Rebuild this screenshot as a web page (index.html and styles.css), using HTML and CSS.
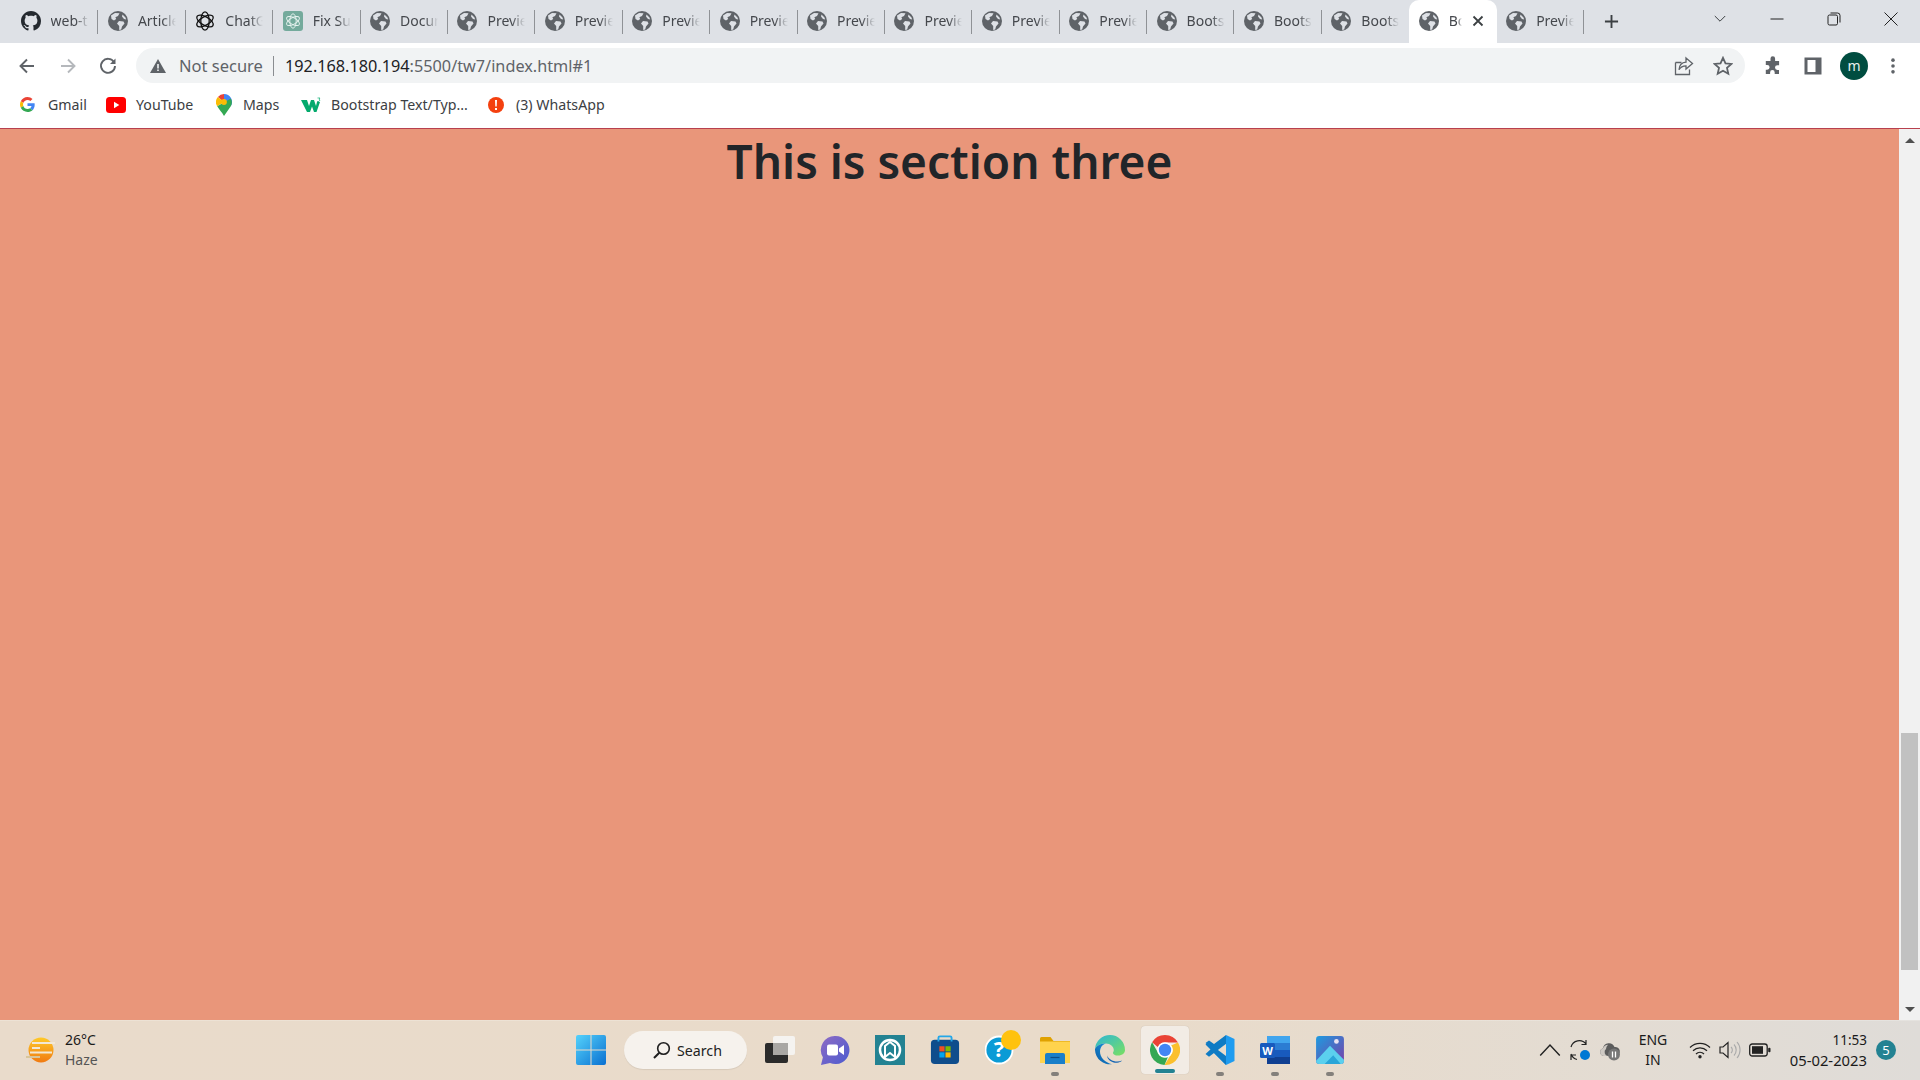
FILE: index.html
```html
<!DOCTYPE html>
<html lang="en">
<head>
<meta charset="utf-8">
<title>Bootstrap</title>
<link rel="stylesheet" href="styles.css">
</head>
<body>
<svg class="defs" width="0" height="0">
  <symbol id="globe" viewBox="0 0 20 20">
    <circle cx="10" cy="10" r="10" fill="#5f6368"/>
    <path d="M3 4.500l4-2.600 4.500.3L10 5 7.400 6.200 8.200 8 6 9.400 3.500 8zM11 10l4.500.4 1 2.200L14 15.500l-.8 3-2 .6V15L9 12.500zM14.500 3.500l3 3 .6 2-2.100-.6-2-2.400z" fill="#dee1e6"/>
  </symbol>
</svg>

<header class="tabstrip">
  <div class="tab sep"><svg class="fav" viewBox="0 0 16 16"><path fill="#24292f" d="M8 0C3.580 0 0 3.580 0 8c0 3.540 2.290 6.530 5.470 7.590.4.070.55-.17.55-.38 0-.19-.01-.82-.01-1.490-2.010.37-2.530-.49-2.690-.94-.09-.23-.48-.94-.82-1.130-.28-.15-.68-.52-.01-.53.63-.01 1.080.58 1.230.82.720 1.210 1.870.87 2.330.66.070-.52.280-.87.510-1.070-1.780-.2-3.640-.89-3.640-3.950 0-.87.310-1.590.82-2.150-.08-.2-.36-1.020.08-2.120 0 0 .67-.21 2.200.82.640-.18 1.320-.27 2-.27s1.360.09 2 .27c1.530-1.040 2.200-.82 2.200-.82.440 1.100.160 1.920.080 2.120.51.56.82 1.270.82 2.150 0 3.070-1.870 3.750-3.650 3.950.29.250.54.730.54 1.480 0 1.070-.01 1.930-.01 2.200 0 .21.150.46.550.38A8.010 8.010 0 0 0 16 8c0-4.420-3.580-8-8-8z"/></svg><span class="tab-title">web-t</span></div>
  <div class="tab sep"><svg class="fav"><use href="#globe"/></svg><span class="tab-title">Article</span></div>
  <div class="tab sep"><svg class="fav" viewBox="0 0 20 20"><g fill="none" stroke="#111" stroke-width="1.300"><ellipse cx="10" cy="10" rx="4.200" ry="9.200"/><ellipse cx="10" cy="10" rx="4.200" ry="9.200" transform="rotate(60 10 10)"/><ellipse cx="10" cy="10" rx="4.200" ry="9.200" transform="rotate(120 10 10)"/></g></svg><span class="tab-title">ChatGPT</span></div>
  <div class="tab sep"><svg class="fav" viewBox="0 0 20 20"><rect width="20" height="20" rx="3" fill="#74aa9c"/><g fill="none" stroke="#e8f3f0" stroke-width=".9"><ellipse cx="10" cy="10" rx="3.200" ry="7.200"/><ellipse cx="10" cy="10" rx="3.200" ry="7.200" transform="rotate(60 10 10)"/><ellipse cx="10" cy="10" rx="3.200" ry="7.200" transform="rotate(120 10 10)"/></g></svg><span class="tab-title">Fix Subm</span></div>
  <div class="tab sep"><svg class="fav"><use href="#globe"/></svg><span class="tab-title">Document</span></div>
  <div class="tab sep"><svg class="fav"><use href="#globe"/></svg><span class="tab-title">Preview</span></div>
  <div class="tab sep"><svg class="fav"><use href="#globe"/></svg><span class="tab-title">Preview</span></div>
  <div class="tab sep"><svg class="fav"><use href="#globe"/></svg><span class="tab-title">Preview</span></div>
  <div class="tab sep"><svg class="fav"><use href="#globe"/></svg><span class="tab-title">Preview</span></div>
  <div class="tab sep"><svg class="fav"><use href="#globe"/></svg><span class="tab-title">Preview</span></div>
  <div class="tab sep"><svg class="fav"><use href="#globe"/></svg><span class="tab-title">Preview</span></div>
  <div class="tab sep"><svg class="fav"><use href="#globe"/></svg><span class="tab-title">Preview</span></div>
  <div class="tab sep"><svg class="fav"><use href="#globe"/></svg><span class="tab-title">Preview</span></div>
  <div class="tab sep"><svg class="fav"><use href="#globe"/></svg><span class="tab-title">Bootstrap</span></div>
  <div class="tab sep"><svg class="fav"><use href="#globe"/></svg><span class="tab-title">Bootstrap</span></div>
  <div class="tab"><svg class="fav"><use href="#globe"/></svg><span class="tab-title">Bootstrap</span></div>
  <div class="tab active"><svg class="fav"><use href="#globe"/></svg><span class="tab-title short">Bootstrap</span>
    <svg class="tab-close" viewBox="0 0 12 12"><path d="M1.500 1.500l9 9m0-9l-9 9" stroke="#3c4043" stroke-width="1.800" fill="none"/></svg></div>
  <div class="tab sep"><svg class="fav"><use href="#globe"/></svg><span class="tab-title">Preview</span></div>
  <svg class="newtab" viewBox="0 0 16 16"><path d="M8 1v14M1 8h14" stroke="#3c4043" stroke-width="2" fill="none"/></svg>
  <div class="winctl">
    <svg class="wc-chev" viewBox="0 0 12 8"><path d="M.8 1l5.200 5.200L11.200 1" stroke="#3c4043" fill="none"/></svg>
    <svg class="wc-btn" viewBox="0 0 14 14"><path d="M.5 7h13" stroke="#222" fill="none"/></svg>
    <svg class="wc-btn" viewBox="0 0 14 14"><rect x="1" y="3" width="9.500" height="10" rx="1.500" stroke="#222" fill="none"/><path d="M3.500 1h7a2.500 2.500 0 0 1 2.500 2.500v7" stroke="#222" fill="none"/></svg>
    <svg class="wc-btn" viewBox="0 0 14 14"><path d="M.5.500l13 13m0-13l-13 13" stroke="#222" fill="none"/></svg>
  </div>
</header>

<nav class="toolbar">
  <svg class="tool" viewBox="0 0 20 20"><path d="M17 10H4m6-6.500L3.500 10l6.500 6.500" stroke="#5f6368" stroke-width="1.900" fill="none"/></svg>
  <svg class="tool tool-gap" viewBox="0 0 20 20"><path d="M3 10h13m-6-6.500l6.500 6.500-6.500 6.500" stroke="#b5b8bc" stroke-width="1.900" fill="none"/></svg>
  <svg class="tool tool-gap-r" viewBox="0 0 20 20"><path d="M16 6.200A7 7 0 1 0 17 10" stroke="#5f6368" stroke-width="1.900" fill="none"/><path d="M17.500 2.500v5.500H12z" fill="#5f6368"/></svg>
  <div class="omnibox">
    <svg class="warn" viewBox="0 0 16 14"><path d="M8 0l8 14H0z" fill="#5f6368"/><path d="M7.200 5h1.600v4.500H7.200zM7.200 10.500h1.600V12H7.200z" fill="#f1f3f4"/></svg>
    <span class="not-secure">Not secure</span>
    <span class="omni-sep"></span>
    <span class="url"><span class="host">192.168.180.194</span><span class="path">:5500/tw7/index.html#1</span></span>
    <svg class="omni-share" viewBox="0 0 20 20"><path d="M1.500 6.500h6M1.500 6.500v12h14v-5" stroke="#5f6368" stroke-width="1.300" fill="none"/><path d="M12 2l6.500 5.500L12 13v-3.200c-3.500 0-5.500 1.200-7 4 .3-4.500 2.800-7.300 7-7.600z" stroke="#5f6368" stroke-width="1.300" fill="none"/></svg>
    <svg class="omni-star" viewBox="0 0 20 20"><path d="M10 1.800l2.500 5.500 6 .6-4.500 4 1.300 5.900L10 14.800l-5.300 3 1.300-5.900-4.500-4 6-.6z" stroke="#5f6368" stroke-width="1.800" fill="none"/></svg>
  </div>
  <svg class="tool ext" viewBox="0 0 20 20"><path d="M7.500 2.500a2.300 2.300 0 0 1 4.600 0V5h4v4.200h-1.700a2.400 2.400 0 0 0 0 4.800H16V18h-4.300v-1.600a2.300 2.300 0 0 0-4.600 0V18H2.800v-4.300h1.400a2.400 2.400 0 0 0 0-4.800H2.800V5h4.700z" fill="#5f6368"/></svg>
  <svg class="tool panel" viewBox="0 0 20 20"><path fill-rule="evenodd" d="M1.500 1.500h17v17h-17zM4.500 4v12h8V4z" fill="#5f6368"/></svg>
  <span class="avatar">m</span>
  <svg class="tool dots" viewBox="0 0 20 20"><circle cx="10" cy="3.500" r="2" fill="#5f6368"/><circle cx="10" cy="10" r="2" fill="#5f6368"/><circle cx="10" cy="16.500" r="2" fill="#5f6368"/></svg>
</nav>

<nav class="bookmarks">
  <a class="bm bm-gmail"><svg class="bm-ico" viewBox="0 0 48 48"><path fill="#EA4335" d="M24 9.500c3.540 0 6.710 1.220 9.210 3.600l6.850-6.850C35.900 2.380 30.470 0 24 0 14.620 0 6.510 5.380 2.560 13.220l7.980 6.190C12.430 13.720 17.740 9.500 24 9.500z"/><path fill="#4285F4" d="M46.980 24.550c0-1.570-.15-3.090-.38-4.550H24v9.020h12.940c-.58 2.960-2.260 5.480-4.780 7.180l7.730 6c4.510-4.180 7.090-10.360 7.090-17.650z"/><path fill="#FBBC05" d="M10.530 28.590c-.48-1.450-.76-2.990-.76-4.590s.27-3.140.76-4.590l-7.980-6.190C.92 16.460 0 20.120 0 24c0 3.880.92 7.540 2.560 10.780l7.970-6.190z"/><path fill="#34A853" d="M24 48c6.480 0 11.930-2.130 15.890-5.810l-7.730-6c-2.150 1.450-4.920 2.300-8.160 2.300-6.260 0-11.570-4.220-13.470-9.910l-7.980 6.190C6.510 42.620 14.620 48 24 48z"/></svg>Gmail</a>
  <a class="bm bm-yt"><svg class="bm-ico yt" viewBox="0 0 20 16"><rect width="20" height="16" rx="3.500" fill="#f00"/><path d="M8 4.800l5.300 3.200L8 11.200z" fill="#fff"/></svg>YouTube</a>
  <a class="bm bm-maps"><svg class="bm-ico maps" viewBox="0 0 16 22"><path d="M8 0a8 8 0 0 1 6.800 12.200L8 5.500z" fill="#4285f4"/><path d="M8 0a8 8 0 0 0-6.100 2.900L8 8z" fill="#ea4335"/><path d="M1.900 2.900A8 8 0 0 0 1.200 12.200L8 8z" fill="#fbbc04"/><path d="M1.200 12.200L14.800 4.500a8 8 0 0 1 0 7.700L8 22C6 18 3 15.500 1.200 12.200z" fill="#34a853"/><circle cx="8" cy="8" r="2.900" fill="#fbbc04"/></svg>Maps</a>
  <a class="bm bm-w"><svg class="bm-ico w3" viewBox="0 0 20 16"><path d="M0 3h6l2 6 2-6h3l2 6 1-4h3l-3.500 10h-2.500L11 9.500 9 15H6z" fill="#04aa6d"/><path d="M16.500 1h2.500l-1 1.200 1 .8-1 1.500h-2" stroke="#04aa6d" stroke-width=".7" fill="none"/></svg>Bootstrap Text/Typ...</a>
  <a class="bm bm-wa"><svg class="bm-ico wa" viewBox="0 0 16 16"><circle cx="8" cy="8" r="8" fill="#f4400f"/><path d="M7 3h2l-.3 6.500H7.300zM7 11h2v2H7z" fill="#fff"/></svg>(3) WhatsApp</a>
</nav>

<main class="viewport">
  <section class="section-three"><h1 class="section-title">This is section three</h1></section>
  <aside class="scrollbar">
    <span class="arrow-up"></span>
    <span class="thumb"></span>
    <span class="arrow-down"></span>
  </aside>
</main>

<footer class="taskbar">
  <div class="weather">
    <svg class="weather-ico" viewBox="0 0 30 26"><defs><linearGradient id="sun" x1="0" y1="0" x2="0" y2="1"><stop offset="0" stop-color="#ffc928"/><stop offset="1" stop-color="#f07a12"/></linearGradient></defs><circle cx="15" cy="13" r="12.500" fill="url(#sun)"/><g stroke="#f2e8d5" stroke-width="2" fill="none"><path d="M6 6h23"/><path d="M6 11h8"/><path d="M4 15.500h22"/></g><path d="M0 20h14" stroke="#d8c59a" stroke-width="2"/></svg>
    <div class="weather-text"><span class="temp">26°C</span><span class="cond">Haze</span></div>
  </div>
  <div class="task-center">
    <span class="cell"><svg class="ti" viewBox="0 0 30 30"><defs><linearGradient id="w1" x1="0" y1="0" x2="1" y2="1"><stop offset="0" stop-color="#55d2fb"/><stop offset="1" stop-color="#0a70d1"/></linearGradient></defs><path d="M2 0h12.500v14.500H0V2a2 2 0 0 1 2-2zM15.500 0H28a2 2 0 0 1 2 2v12.500H15.500zM0 15.500h14.500V30H2a2 2 0 0 1-2-2zM15.500 15.500H30V28a2 2 0 0 1-2 2H15.500z" fill="url(#w1)"/></svg></span>
    <span class="search"><svg class="search-ico" viewBox="0 0 18 18"><circle cx="10.500" cy="7.500" r="5.800" stroke="#1f1f1f" stroke-width="1.600" fill="none"/><path d="M6.300 11.700L1 17" stroke="#1f1f1f" stroke-width="2" fill="none"/></svg>Search</span>
    <span class="cell"><svg class="ti" viewBox="0 0 30 30"><rect x="0" y="8" width="23" height="20" rx="2" fill="#2b2b2b"/><rect x="8" y="1" width="22" height="19" rx="2" fill="#f5f3f0"/><rect x="8" y="8" width="15" height="12" fill="#a9a7a4"/></svg></span>
    <span class="cell"><svg class="ti" viewBox="0 0 30 30"><defs><linearGradient id="tm" x1="0" y1="0" x2="1" y2="1"><stop offset="0" stop-color="#8e6bc4"/><stop offset="1" stop-color="#4b5bd0"/></linearGradient></defs><path d="M15.500 1a14 14 0 1 1-5.500 26.900L1 30l1.900-7.800A14 14 0 0 1 15.500 1z" fill="url(#tm)"/><rect x="7" y="9.500" width="11" height="11" rx="2" fill="#fff"/><path d="M19 13.500l5-3.500v10l-5-3.500z" fill="#fff"/></svg></span>
    <span class="cell"><svg class="ti" viewBox="0 0 30 30"><rect width="30" height="30" fill="#238292"/><circle cx="15" cy="15" r="10" fill="none" stroke="#fff" stroke-width="2.500"/><path d="M10 22V11l5-4 5 4v11l-5-4z" fill="none" stroke="#fff" stroke-width="2"/></svg></span>
    <span class="cell"><svg class="ti" viewBox="0 0 30 32"><rect y="5" width="30" height="26" rx="4" fill="#0f4d8c"/><path d="M8 7V3a1.500 1.500 0 0 1 1.500-1.500h11A1.500 1.500 0 0 1 22 3v4" stroke="#25a7e8" stroke-width="2" fill="none"/><rect x="9" y="12" width="5.500" height="5.500" fill="#f25022"/><rect x="15.500" y="12" width="5.500" height="5.500" fill="#7fba00"/><rect x="9" y="18.500" width="5.500" height="5.500" fill="#00a4ef"/><rect x="15.500" y="18.500" width="5.500" height="5.500" fill="#ffb900"/></svg></span>
    <span class="cell"><svg class="ti ti-help" viewBox="0 0 36 36"><circle cx="14" cy="20" r="13.500" fill="#0a9bd6" stroke="#fff" stroke-width="1.800"/><text class="help-q" x="14" y="27">?</text><circle cx="26" cy="10" r="10" fill="#ffc20e"/></svg></span>
    <span class="cell open"><svg class="ti" viewBox="0 0 30 28"><path d="M0 2.500A1.500 1.500 0 0 1 1.500 1h9l3 4H30v3H0z" fill="#e0a100"/><path d="M0 5.500h30V27H0z" fill="#ffd34d"/><path d="M5 19a2 2 0 0 1 2-2h16a2 2 0 0 1 2 2v9H5z" fill="#1a7fc9"/><path d="M10.500 21.500h9" stroke="#0d4f88" stroke-width="1.200"/></svg></span>
    <span class="cell"><svg class="ti" viewBox="0 0 30 30"><defs><linearGradient id="ed1" x1="0" y1="1" x2="1" y2="0"><stop offset="0" stop-color="#0c59a4"/><stop offset="1" stop-color="#1b9de2"/></linearGradient><linearGradient id="ed2" x1="0" y1="0" x2="1" y2="1"><stop offset="0" stop-color="#2cb6d6"/><stop offset="1" stop-color="#7be060"/></linearGradient></defs><path d="M15 0a15 15 0 0 1 15 15c0 3-2.500 5.500-7 5.500-3 0-5-1.200-5-2.600 0-.8.800-1.200.800-2.900 0-3.500-3.500-6.500-7.800-6.500C5.500 8.500 1.500 10.500 0 14A15 15 0 0 1 15 0z" fill="url(#ed2)"/><path d="M0 14c1.500-3.500 5.500-5.500 11-5.500-4 1-6 4.500-6 8 0 6 5 11 12 12.700A15 15 0 0 1 0 15z" fill="url(#ed1)"/><path d="M12 20c0 5 5 8 10 7.800 2-.1 4-1 5-2.300-3 1.500-8 1.500-11.500-1-2-1.500-3.500-3-3.500-4.500z" fill="#1666b4"/></svg></span>
    <span class="cell chrome-cell open-active"><svg class="ti" viewBox="0 0 30 30"><path d="M15 0a15 15 0 0 1 13 7.500H15a7.500 7.500 0 0 0-7 4.800L2.100 7.300A15 15 0 0 1 15 0z" fill="#ea4335"/><path d="M28 7.500A15 15 0 0 1 14.500 30l6.300-10.300A7.500 7.500 0 0 0 21 10.500z" fill="#fbc02d"/><path d="M14.500 30A15 15 0 0 1 2.100 7.300L8.700 19A7.500 7.500 0 0 0 18 21.700z" fill="#34a853"/><circle cx="15" cy="15" r="7.800" fill="#fff"/><circle cx="15" cy="15" r="6.200" fill="#4285f4"/></svg></span>
    <span class="cell open"><svg class="ti" viewBox="0 0 30 30"><path d="M21 0l8.500 4v22L21 30 9 18l12-9z" fill="#1f9cf0"/><path d="M21 0v9L9 18l-5 3.800L.5 19l6-5.500-6-5.500L4 5.500l5 3.500z" fill="#0f7bc4"/><path d="M21 30V20.500L4 7 .5 9.500l20.500 20.500z" fill="#0f7bc4"/><path d="M21 9v12l-8-6z" fill="#e8dccd"/></svg></span>
    <span class="cell open"><svg class="ti" viewBox="0 0 30 28"><rect x="7" y="0" width="23" height="28" rx="2" fill="#2b7cd3"/><rect x="7" y="0" width="23" height="7" fill="#41a5ee"/><rect x="7" y="14" width="23" height="7" fill="#185abd"/><rect x="7" y="21" width="23" height="7" fill="#103f91"/><rect x="0" y="7" width="15" height="15" rx="1.500" fill="#185abd"/><text class="word-w" x="7.500" y="19">W</text></svg></span>
    <span class="cell open"><svg class="ti" viewBox="0 0 28 28"><defs><linearGradient id="ph" x1="0" y1="0" x2="1" y2="1"><stop offset="0" stop-color="#1d9be0"/><stop offset="1" stop-color="#7a3fa8"/></linearGradient></defs><rect width="26" height="26" x="1" y="1" rx="3" fill="url(#ph)"/><circle cx="20" cy="6" r="2.200" fill="#e9e3f2"/><path d="M1 24l13-14 13 13v2a2 2 0 0 1-2 2H4a3 3 0 0 1-3-3z" fill="#5bd0ee"/><path d="M9 27l8-8 7 8z" fill="#2aa5d8"/></svg></span>
  </div>
  <div class="tray">
    <svg class="tray-ico" viewBox="0 0 18 12"><path d="M1 10.500L9 2l8 8.500" stroke="#222" stroke-width="1.200" fill="none"/></svg>
    <svg class="tray-ico" viewBox="0 0 22 22"><path d="M2 8a8.500 8.500 0 0 1 15-3M17 1v4.500h-4.500" stroke="#222" stroke-width="1.200" fill="none"/><path d="M2 15a8.500 8.500 0 0 0 6 5.500M2 21v-5h5" stroke="#222" stroke-width="1.200" fill="none"/><circle cx="16" cy="16" r="5" fill="#0078d4"/></svg>
    <svg class="tray-ico" viewBox="0 0 22 22"><path d="M5 17a4 4 0 0 1-1-7.800A6 6 0 0 1 15.500 8 4.500 4.500 0 0 1 17 17z" fill="#5c5c5c"/><path d="M5 17a4 4 0 0 1-1-7.800 6 6 0 0 1 5-3.500 6 6 0 0 0-2 4.300A4 4 0 0 0 9 17z" fill="#cfcac4"/><circle cx="15" cy="15.500" r="6" fill="#777"/><path d="M13.500 12.500v6M16.500 12.500v6" stroke="#fff" stroke-width="1.300"/></svg>
    <div class="lang"><span>ENG</span><span>IN</span></div>
    <svg class="tray-ico" viewBox="0 0 22 18"><path d="M1 6.500a14 14 0 0 1 20 0M4 9.800a10 10 0 0 1 14 0M7 13a5.500 5.500 0 0 1 8 0" stroke="#222" stroke-width="1.200" fill="none"/><circle cx="11" cy="15.800" r="1.700" fill="#222"/></svg>
    <svg class="tray-ico" viewBox="0 0 22 18"><path d="M1 6h3l5-4.500v15L4 12H1z" stroke="#222" stroke-width="1.200" fill="none"/><path d="M12 6a4 4 0 0 1 0 6M15 3.500a8 8 0 0 1 0 11M18 1a12 12 0 0 1 0 16" stroke="#aaa" stroke-width="1.100" fill="none"/></svg>
    <svg class="tray-ico" viewBox="0 0 22 14"><rect x=".7" y="1" width="17.500" height="12" rx="2.500" stroke="#222" stroke-width="1.300" fill="none"/><rect x="3" y="3.200" width="11" height="7.600" fill="#222"/><rect x="19.200" y="4.700" width="2.300" height="4.600" rx="1" fill="#222"/></svg>
    <div class="clock"><span>11:53</span><span class="date">05-02-2023</span></div>
    <span class="badge">5</span>
  </div>
</footer>
</body>
</html>
```
FILE: styles.css
```css
* { box-sizing: border-box; }
html, body { margin: 0; height: 100%; overflow: hidden; }
body {
  display: flex;
  flex-direction: column;
  width: 1920px;
  height: 1080px;
  font-family: "Noto Sans", "Open Sans", "Liberation Sans", sans-serif;
  color: #202124;
  background: #fff;
}
.defs { position: absolute; }
svg { display: block; flex: none; }

/* tab strip */
.tabstrip {
  height: 43px;
  background: #dee1e6;
  display: flex;
  align-items: center;
  padding-left: 11px;
  flex: none;
}
.tab {
  width: 87.4px;
  height: 43px;
  display: flex;
  align-items: center;
  padding-left: 9.500px;
  padding-bottom: 2px;
  position: relative;
  flex: none;
  font-size: 14px;
  color: #45484d;
}
.tab.sep::after {
  content: "";
  position: absolute;
  right: 0;
  top: 10px;
  width: 1px;
  height: 24px;
  background: #8f9296;
}
.tab.active {
  background: #fff;
  border-radius: 10px 10px 0 0;
}
.fav { width: 20px; height: 20px; margin-right: 10px; }
.tab-title {
  width: 38px;
  overflow: hidden;
  white-space: nowrap;
  -webkit-mask-image: linear-gradient(to right, #000 65%, transparent 100%);
  mask-image: linear-gradient(to right, #000 65%, transparent 100%);
}
.tab-title.short { width: 13px; }
.tab-close { width: 12px; height: 12px; margin-left: 10px; }
.newtab { width: 15px; height: 15px; margin-left: 20px; }
.winctl { margin-left: auto; display: flex; align-items: center; height: 38px; margin-top: -5px; }
.wc-chev { width: 12px; height: 8px; margin-right: 44px; }
.wc-btn { width: 14px; height: 14px; margin-right: 43px; }
.wc-btn:last-child { margin-right: 22px; }

/* toolbar */
.toolbar {
  height: 40px;
  padding-top: 5px;
  display: flex;
  align-items: center;
  padding-left: 17px;
  flex: none;
}
.tool { width: 20px; height: 20px; }
.tool-gap { margin-left: 21px; }
.tool-gap-r { margin-left: 20px; }
.omnibox {
  width: 1609px;
  height: 35px;
  margin-left: 18px;
  border-radius: 18px;
  background: #f1f3f4;
  display: flex;
  align-items: center;
  padding-left: 14px;
  font-size: 16px;
}
.warn { width: 16px; height: 14px; margin-right: 13px; }
.not-secure { color: #5f6368; width: 84px; white-space: nowrap; font-size: 16.500px; }
.omni-sep { width: 1px; height: 20px; background: #8a8d91; margin: 0 11px 0 10px; }
.url { white-space: nowrap; width: 340px; font-size: 16.250px; }
.host { color: #202124; }
.path { color: #5f6368; }
.omni-share { width: 20px; height: 20px; margin-left: auto; margin-right: 19px; }
.omni-star { width: 20px; height: 20px; margin-right: 12px; }
.ext { margin-left: 18px; }
.panel { margin-left: 20px; }
.avatar {
  width: 28px;
  height: 28px;
  border-radius: 50%;
  background: #004d40;
  color: #e8f0ee;
  font-size: 14px;
  margin-left: 17px;
  display: flex;
  align-items: center;
  justify-content: center;
  flex: none;
}
.dots { margin-left: 15px; width: 20px; height: 18px; }

/* bookmarks */
.bookmarks {
  height: 46px;
  flex: none;
  display: flex;
  align-items: center;
  padding-left: 20px;
  padding-bottom: 2px;
  font-size: 14.200px;
  color: #3c4043;
  border-bottom: 1px solid #b8404f;
}
.bm { display: flex; align-items: center; white-space: nowrap; }
.bm-ico { width: 15px; height: 15px; margin-right: 13px; }
.bm-gmail { width: 86px; }
.bm-yt { width: 110px; }
.bm-maps { width: 85px; }
.bm-w { width: 187px; }
.yt { width: 20px; height: 16px; margin-right: 10px; }
.maps { width: 16px; height: 22px; margin-right: 11px; }
.w3 { width: 20px; height: 16px; margin-right: 10px; }
.wa { width: 16px; height: 16px; margin-right: 12px; }

/* page */
.viewport { flex: 1; display: flex; min-height: 0; }
.section-three { flex: 1; background: #e9967a; text-align: center; }
.section-title {
  margin: 0;
  font-size: 46px;
  font-weight: 600;
  line-height: 65px;
  color: #212529;
}
.scrollbar {
  width: 21px;
  background: #f1f1f1;
  display: flex;
  flex-direction: column;
  align-items: center;
  padding-top: 9px;
}
.arrow-up, .arrow-down { width: 0; height: 0; border-left: 5px solid transparent; border-right: 5px solid transparent; }
.arrow-up { border-bottom: 5px solid #505050; }
.thumb { width: 17px; height: 237px; background: #c1c1c1; margin-top: 590px; }
.arrow-down { border-top: 5px solid #505050; margin-top: 37px; }

/* taskbar */
.taskbar {
  height: 60px;
  flex: none;
  display: flex;
  align-items: center;
  background: linear-gradient(to right, #e9dbcb 0%, #e9dbca 60%, #e3dcd3 85%, #dfdcd8 100%);
  box-shadow: inset 0 1px 0 rgba(255,255,255,.2);
  font-size: 14px;
  color: #1a1a1a;
}
.weather { width: 563px; display: flex; align-items: center; padding-left: 26px; flex: none; }
.weather-ico { width: 30px; height: 26px; margin-right: 9px; }
.weather-text { display: flex; flex-direction: column; line-height: 20px; }
.cond { color: #555; }
.task-center { display: flex; align-items: center; flex: none; }
.cell {
  width: 55px;
  height: 48px;
  display: flex;
  align-items: center;
  justify-content: center;
  position: relative;
  flex: none;
}
.ti { width: 30px; height: 30px; }
.ti-help { width: 36px; height: 36px; margin-top: -5px; margin-left: 6px; }
.help-q { font: 700 22px "Noto Sans", sans-serif; fill: #fff; text-anchor: middle; }
.word-w { font: 700 11px "Noto Sans", sans-serif; fill: #fff; text-anchor: middle; }
.search {
  width: 123px;
  height: 38px;
  margin: 0 5px 0 6px;
  border-radius: 19px;
  background: #f6f2ed;
  box-shadow: 0 1px 1px rgba(0,0,0,.08);
  display: flex;
  align-items: center;
  padding-left: 29px;
  font-size: 14.200px;
  color: #222;
  flex: none;
}
.search-ico { width: 18px; height: 18px; margin-right: 6px; }
.cell.open::after, .open-active::after {
  content: "";
  position: absolute;
  bottom: -2px;
  left: 50%;
  width: 8px;
  height: 4px;
  margin-left: -4px;
  border-radius: 2px;
  background: #84807b;
}
.chrome-cell { width: 48px; margin: 0 3.500px; background: #f2ece5; border-radius: 4px; box-shadow: 0 0 1px rgba(0,0,0,.2); }
.open-active::after { width: 20px; margin-left: -10px; bottom: 1px; background: #238292; }
.tray { margin-left: auto; display: flex; align-items: center; width: 385px; font-size: 14px; }
.tray-ico { width: 30px; height: 22px; padding: 0 4px; }
.lang { width: 56px; margin-right: 4px; text-align: center; display: flex; flex-direction: column; line-height: 20px; }
.clock { width: 92px; display: flex; flex-direction: column; align-items: flex-end; line-height: 20px; font-size: 13.500px; }
.date { font-size: 14.800px; }
.badge {
  width: 20px;
  height: 20px;
  border-radius: 50%;
  background: #238292;
  color: #fff;
  font-size: 13px;
  margin-left: 9px;
  display: flex;
  align-items: center;
  justify-content: center;
  flex: none;
}
```
